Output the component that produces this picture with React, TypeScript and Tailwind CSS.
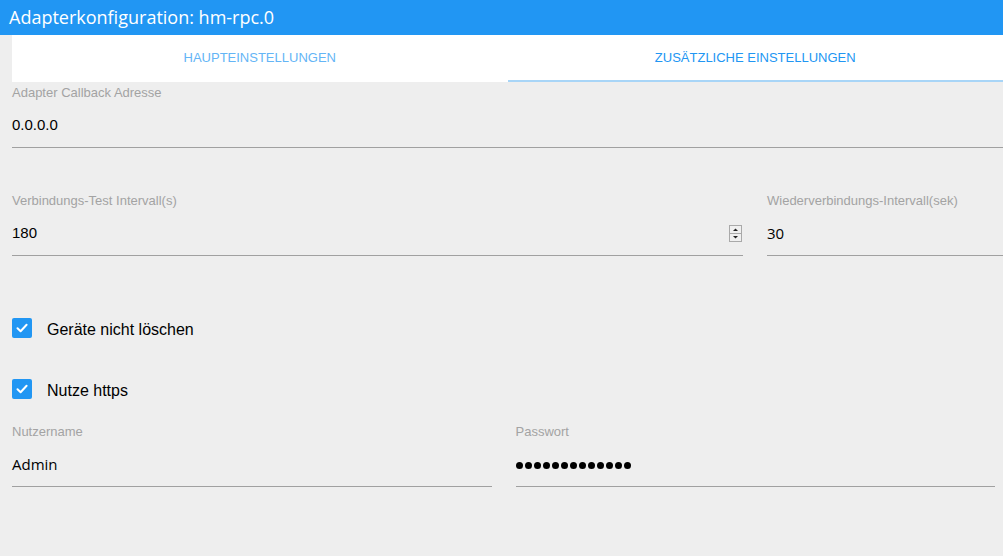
import React from "react";

const SANS = "font-['Liberation_Sans',Arial,sans-serif]";
const SEGOE = "font-['Open_Sans','Noto_Sans',sans-serif]";

function Field({
  label,
  value,
  className = "",
  valueClass = SANS,
  spinner = false,
}: {
  label: string;
  value: React.ReactNode;
  className?: string;
  valueClass?: string;
  spinner?: boolean;
}) {
  return (
    <div className={`flex flex-col ${className}`}>
      <div className={`${SANS} text-[13px] leading-[14px] text-[#a3a3a3]`}>{label}</div>
      <div className="mt-[15px] box-content flex h-[20px] items-center justify-between border-b border-[#a0a0a0] pb-[12px]">
        <span className={`${valueClass} text-[15px] leading-[20px] text-black`}>{value}</span>
        {spinner && (
          <svg width="13" height="17" viewBox="0 0 13 17" className="mr-[1px]">
            <rect x="0.5" y="0.5" width="12" height="16" fill="#f0f0f0" stroke="#a9a9a9" />
            <line x1="0.5" y1="8.5" x2="12.5" y2="8.5" stroke="#a9a9a9" />
            <path d="M4 6 L6.5 3.5 L9 6 Z" fill="#222" />
            <path d="M4 11 L6.5 13.5 L9 11 Z" fill="#222" />
          </svg>
        )}
      </div>
    </div>
  );
}

function Check({ label }: { label: string }) {
  return (
    <div className="flex h-[20px] items-center">
      <div className="flex h-[20px] w-[20px] items-center justify-center rounded-[2px] bg-[#2196f3]">
        <svg width="14" height="14" viewBox="0 0 14 14">
          <path d="M2.5 7.3 L5.6 10.2 L11.6 3.8" fill="none" stroke="white" strokeWidth="2" strokeLinecap="round" strokeLinejoin="round" />
        </svg>
      </div>
      <span className={`${SANS} ml-[15px] mt-[3px] text-[16px] leading-[20px] text-black`}>{label}</span>
    </div>
  );
}

function Dots({ n }: { n: number }) {
  return (
    <span className="flex items-center gap-[2px] pt-[2px]">
      {Array.from({ length: n }).map((_, i) => (
        <span key={i} className="block h-[7px] w-[7px] rounded-full bg-black" />
      ))}
    </span>
  );
}

export default function App() {
  return (
    <div className="h-[556px] w-[1003px] overflow-hidden bg-[#eeeeee]">
      <div className={`${SEGOE} flex h-[35px] items-center bg-[#2196f3] pl-[9px] text-[18px] text-white`}>
        Adapterkonfiguration: hm-rpc.0
      </div>
      <div className={`${SANS} ml-[12px] flex h-[47px] bg-white text-[13px]`}>
        <div className="flex flex-1 items-center justify-center pb-[1px] text-[#64b5f6]">HAUPTEINSTELLUNGEN</div>
        <div className="flex flex-1 items-center justify-center border-b-2 border-[#a8d5f7] text-[#2196f3]">
          ZUSÄTZLICHE EINSTELLUNGEN
        </div>
      </div>
      <div className="pl-[12px]">
        <Field label="Adapter Callback Adresse" value="0.0.0.0" className="mt-[4px]" />
        <div className="mt-[46px] flex gap-[24px]">
          <Field label="Verbindungs-Test Intervall(s)" value="180" className="w-[731px]" spinner />
          <Field label="Wiederverbindungs-Intervall(sek)" value="30" valueClass={SEGOE} className="flex-1" />
        </div>
        <div className="mt-[62px]">
          <Check label="Geräte nicht löschen" />
        </div>
        <div className="mt-[41px]">
          <Check label="Nutze https" />
        </div>
        <div className="mt-[26px] flex gap-[24px] pr-[8px]">
          <Field label="Nutzername" value="Admin" valueClass={SEGOE} className="flex-1" />
          <Field label="Passwort" value={<Dots n={13} />} className="flex-1" />
        </div>
      </div>
    </div>
  );
}
